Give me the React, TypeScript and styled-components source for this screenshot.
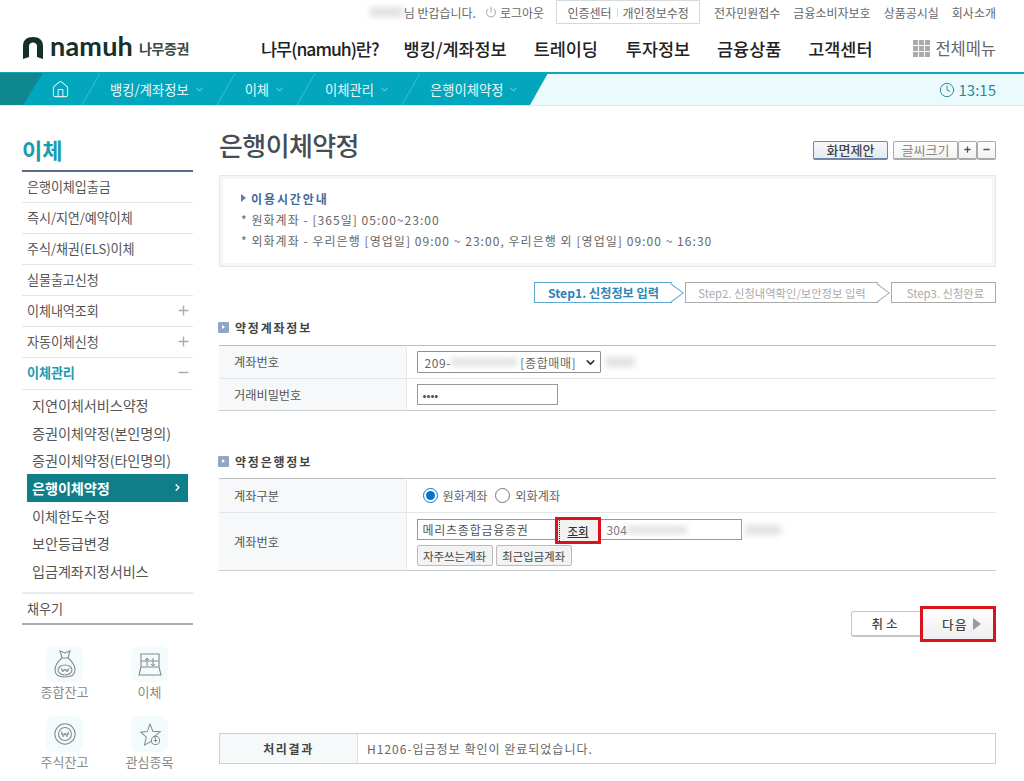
import React from "react";
import styled, { createGlobalStyle } from "styled-components";
import { ChevronDown, ChevronRight, Clock, House, Plus, Minus, Power } from "lucide-react";

const GlobalStyle = createGlobalStyle`
  html, body { margin: 0; padding: 0; background: #fff; }
  body {
    font-family: "Noto Sans CJK KR", "Noto Sans", sans-serif;
    font-size: 12px;
    color: #555;
    overflow: hidden;
  }
  * { box-sizing: border-box; }
`;

const Page = styled.div`
  width: 1024px;
  height: 781px;
  overflow: hidden;
`;

const Blur = styled.span<{ $w: number; $h?: number }>`
  display: inline-block;
  width: ${(p) => p.$w}px;
  height: ${(p) => p.$h ?? 10}px;
  background: #cfd1d3;
  filter: blur(3px);
  opacity: 0.65;
  flex: none;
`;

const UtilBar = styled.div`
  height: 24px;
  padding-right: 28px;
  display: flex;
  justify-content: flex-end;
  align-items: center;
  font-size: 12px;
  color: #666;
`;

const Greeting = styled.span`
  display: flex;
  align-items: center;
  gap: 1px;
  margin-right: 9px;
`;

const Logout = styled.span`
  display: flex;
  align-items: center;
  gap: 3px;
  margin-right: 12px;
`;

const CertBox = styled.div`
  width: 144px;
  height: 24px;
  border: 1px solid #d5d9da;
  display: flex;
  align-items: center;
  justify-content: center;
  gap: 5px;
  margin-right: 1px;
`;

const Divider = styled.i`
  width: 1px;
  height: 9px;
  background: #ddd;
`;

const UtilLink = styled.span`
  margin-left: 13px;
`;

const Header = styled.header`
  height: 48px;
  padding: 0 28px 0 22px;
  display: flex;
  align-items: center;
`;

const Logo = styled.div`
  width: 239px;
  display: flex;
  align-items: center;
  color: #15302c;
`;

const LogoWord = styled.span`
  font-family: Lato, sans-serif;
  font-size: 27px;
  font-weight: 700;
  line-height: 1;
  margin: -5px 6px 0 6px;
  letter-spacing: 0.2px;
`;

const LogoKr = styled.span`
  font-size: 14px;
  font-weight: 700;
  color: #3a4a47;
  letter-spacing: -0.4px;
`;

const Nav = styled.nav`
  flex: 1;
  display: flex;
  align-items: center;
  font-size: 17.5px;
  font-weight: 500;
  color: #222;
  letter-spacing: -0.05px;
`;

const NavItem = styled.span<{ $gap: number; $tight?: boolean }>`
  margin-right: ${(p) => p.$gap}px;
  white-space: nowrap;
  letter-spacing: ${(p) => (p.$tight ? "-1px" : "inherit")};
`;

const AllMenu = styled.span`
  margin-left: auto;
  display: flex;
  align-items: center;
  gap: 5px;
  font-size: 16.5px;
  font-weight: 400;
  color: #666;
`;

const GridIcon = styled.span`
  display: grid;
  grid-template-columns: repeat(3, 5px);
  grid-auto-rows: 5px;
  gap: 1px;
  i { background: #aaa; }
`;

const TrailBar = styled.div`
  height: 34px;
  background: #ebfbfd;
  border-top: 2px solid #0fa6bc;
  border-bottom: 1px solid #e4e8e9;
  display: flex;
  padding-right: 28px;
  justify-content: space-between;
`;

const Trail = styled.div`
  width: 548px;
  height: 32px;
  margin-top: -1px;
  background: #03a7bd;
  clip-path: polygon(0 0, 100% 0, 530px 100%, 0 100%);
  display: flex;
  align-items: center;
  color: #e6f8fb;
  font-size: 13.3px;
`;

const HomeWedge = styled.div`
  width: 43px;
  height: 100%;
  background: #0e8791;
  clip-path: polygon(0 0, 100% 0, 23px 100%, 0 100%);
  flex: none;
`;

const HomeCell = styled.div`
  width: 47px;
  flex: none;
  display: flex;
  justify-content: center;
  padding-right: 12px;
`;

const Crumb = styled.div`
  position: relative;
  height: 100%;
  display: flex;
  align-items: center;
  gap: 5px;
  padding: 0 20px 0 20px;
  white-space: nowrap;
  &::before {
    content: "";
    position: absolute;
    left: 0;
    top: -2px;
    height: 38px;
    width: 1px;
    background: #37bbcd;
    transform: rotate(30deg);
  }
`;

const TimeBox = styled.div`
  display: flex;
  align-items: center;
  gap: 4px;
  font-size: 15px;
  color: #2a8a96;
`;

const Body = styled.div`
  display: flex;
  padding: 0 28px 0 22px;
  gap: 26px;
`;

const Side = styled.aside`
  width: 171px;
  flex: none;
`;

const SideTitle = styled.h2`
  margin: 28px 0 0;
  height: 38px;
  border-bottom: 2px solid #5a6b86;
  font-size: 22px;
  line-height: 30px;
  font-weight: 700;
  color: #1a9cb0;
`;

const SideItem = styled.div<{ $open?: boolean; $last?: boolean }>`
  height: 31px;
  padding: 0 2px 2px 5px;
  display: flex;
  align-items: center;
  justify-content: space-between;
  border-bottom: ${(p) => (p.$last ? "0" : "1px solid #e2e5e6")};
  font-size: 13.1px;
  letter-spacing: -0.1px;
  font-weight: ${(p) => (p.$open ? 700 : 400)};
  color: ${(p) => (p.$open ? "#1a9cb0" : "#555")};
`;

const SubList = styled.div`
  border-top: 1px solid #e2e5e6;
  border-bottom: 2px solid #e9ebec;
  padding: 1px 5px 7px;
`;

const SubItem = styled.div<{ $active?: boolean }>`
  height: 27.7px;
  padding: 0 5px;
  display: flex;
  align-items: center;
  justify-content: space-between;
  font-size: 14.2px;
  letter-spacing: -0.1px;
  white-space: nowrap;
  font-weight: ${(p) => (p.$active ? 700 : 400)};
  color: ${(p) => (p.$active ? "#fff" : "#555")};
  background: ${(p) => (p.$active ? "#0e7f88" : "transparent")};
`;

const FillItem = styled(SideItem)`
  border-bottom: 2px solid #a9abad;
  padding-bottom: 0;
`;

const Quick = styled.div`
  display: grid;
  grid-template-columns: 85px 85px;
  grid-auto-rows: 70px;
  margin: 21px 0 0 0;
`;

const QuickItem = styled.div`
  display: flex;
  flex-direction: column;
  align-items: center;
  gap: 0;
  font-size: 13px;
  color: #888;
  white-space: nowrap;
`;

const QuickIcon = styled.div`
  width: 37px;
  height: 36px;
  border-radius: 8px;
  background: #f3fbfc;
  display: flex;
  align-items: center;
  justify-content: center;
`;

const Main = styled.main`
  flex: 1;
  min-width: 0;
`;

const TitleRow = styled.div`
  margin-top: 23px;
  height: 32px;
  display: flex;
  align-items: center;
  justify-content: space-between;
`;

const Title = styled.h1`
  margin: 0;
  font-size: 26px;
  line-height: 32px;
  font-weight: 500;
  color: #454d55;
  letter-spacing: -0.6px;
`;

const Tools = styled.div`
  display: flex;
  align-items: center;
  margin-top: 10px;
`;

const ToolBtn = styled.span<{ $w: number; $blue?: boolean; $gap?: number }>`
  width: ${(p) => p.$w}px;
  height: 19px;
  display: flex;
  align-items: center;
  justify-content: center;
  background: ${(p) => (p.$blue ? "linear-gradient(#f6f8fb, #e4e9f3)" : "linear-gradient(#fff, #f1f1f1)")};
  border: 1px solid ${(p) => (p.$blue ? "#6f86ad" : "#aaa")};
  border-bottom-width: 2px;
  border-radius: 2px;
  font-size: 13px;
  font-weight: ${(p) => (p.$blue ? 500 : 400)};
  color: ${(p) => (p.$blue ? "#444" : "#888")};
  margin-right: ${(p) => p.$gap ?? 0}px;
`;

const InfoBox = styled.section`
  margin-top: 14px;
  height: 92px;
  border: 1px solid #e6e7e7;
  outline: 3px solid #f4f5f5;
  outline-offset: -4px;
  padding: 13px 21px 0;
  font-size: 12px;
  color: #666;
`;

const InfoHead = styled.div`
  display: flex;
  align-items: center;
  gap: 5px;
  height: 18px;
  margin-bottom: 2px;
  font-weight: 700;
  color: #456a9c;
  letter-spacing: 1.9px;
  &::before {
    content: "";
    border-left: 5px solid #5e7fa8;
    border-top: 4px solid transparent;
    border-bottom: 4px solid transparent;
  }
`;

const InfoLine = styled.div`
  height: 21px;
  line-height: 21px;
  white-space: nowrap;
  letter-spacing: 1.05px;
`;

const Steps = styled.div`
  margin-top: 15px;
  height: 21px;
  display: flex;
  justify-content: flex-end;
  gap: 13px;
`;

const Step = styled.div<{ $w: number; $on?: boolean; $arrow?: boolean }>`
  position: relative;
  width: ${(p) => p.$w}px;
  height: 21px;
  border: 1px solid ${(p) => (p.$on ? "#5ea7d0" : "#aaa")};
  border-right-width: ${(p) => (p.$arrow ? 0 : 1)}px;
  display: flex;
  align-items: center;
  justify-content: center;
  font-size: ${(p) => (p.$on ? 12.2 : 11.3)}px;
  font-weight: ${(p) => (p.$on ? 700 : 400)};
  color: ${(p) => (p.$on ? "#2e83b6" : "#aaa")};
  white-space: nowrap;
  padding-left: ${(p) => (p.$arrow ? 0 : 4)}px;
  &::after {
    content: ${(p) => (p.$arrow ? '""' : "none")};
    position: absolute;
    right: -7px;
    top: 2px;
    width: 15px;
    height: 15px;
    border-top: 1px solid ${(p) => (p.$on ? "#5ea7d0" : "#aaa")};
    border-right: 1px solid ${(p) => (p.$on ? "#5ea7d0" : "#aaa")};
    transform: rotate(45deg) skew(-8deg, -8deg);
  }
`;

const SectionHead = styled.h3<{ $top: number }>`
  margin: ${(p) => p.$top}px 0 0 -1px;
  height: 20px;
  display: flex;
  align-items: center;
  gap: 6px;
  font-size: 12px;
  font-weight: 700;
  color: #444;
  letter-spacing: 1.8px;
`;

const HeadMark = styled.i`
  width: 11px;
  height: 11px;
  background: #8fa6c4;
  border-radius: 1px;
  display: flex;
  align-items: center;
  justify-content: center;
  &::before {
    content: "";
    border-left: 3px solid #fff;
    border-top: 2px solid transparent;
    border-bottom: 2px solid transparent;
  }
`;

const FormTable = styled.table<{ $top: number }>`
  width: 100%;
  margin-top: ${(p) => p.$top}px;
  border-collapse: collapse;
  table-layout: fixed;
  border-top: 1px solid #b9bdbf;
  border-bottom: 1px solid #c8cccd;
`;

const Row = styled.tr<{ $h: number }>`
  height: ${(p) => p.$h}px;
  & + & { border-top: 1px solid #e3e6e7; }
`;

const Th = styled.th`
  width: 187px;
  padding: 0 0 0 15px;
  background: #f6f8f9;
  border-right: 1px solid #e6e8e9;
  text-align: left;
  font-size: 12.2px;
  font-weight: 400;
  color: #555;
`;

const Td = styled.td`
  padding: 0 0 0 10px;
  font-size: 12px;
  color: #666;
`;

const FieldRow = styled.div`
  display: flex;
  align-items: center;
`;

const SelectBox = styled.div`
  width: 184px;
  height: 22px;
  border: 1px solid #8f8f8f;
  border-radius: 1px;
  padding: 0 3px 0 7px;
  display: flex;
  align-items: center;
  font-size: 12px;
  letter-spacing: 0.6px;
  color: #666;
  margin-right: 4px;
  white-space: nowrap;
`;

const SelectChevron = styled(ChevronDown)`
  margin-left: auto;
`;

const TextField = styled.div<{ $w: number; $h?: number }>`
  width: ${(p) => p.$w}px;
  height: ${(p) => p.$h ?? 21}px;
  border: 1px solid #999;
  padding: 0 5px;
  display: flex;
  align-items: center;
  font-size: 11.6px;
  color: #555;
  white-space: nowrap;
`;

const Radio = styled.i<{ $on?: boolean; $first?: boolean }>`
  width: 15px;
  height: 15px;
  border-radius: 50%;
  border: ${(p) => (p.$on ? "1.5px solid #0075d8" : "1px solid #777")};
  background: #fff;
  margin-left: ${(p) => (p.$first ? 6 : 0)}px;
  margin-right: 5px;
  display: flex;
  align-items: center;
  justify-content: center;
  &::after {
    content: "";
    display: ${(p) => (p.$on ? "block" : "none")};
    width: 9px;
    height: 9px;
    border-radius: 50%;
    background: #0075d8;
  }
`;

const RadioLabel = styled.span`
  margin-right: 8px;
  font-size: 12.2px;
`;

const BankField = styled.div`
  position: relative;
  width: 325px;
  height: 21px;
  border: 1px solid #999;
  padding-left: 5px;
  display: flex;
  align-items: center;
  font-size: 12px;
  color: #555;
  letter-spacing: 0.75px;
  margin-right: 3px;
`;

const LookupBtn = styled.span`
  position: absolute;
  left: 137px;
  top: -3px;
  width: 46px;
  height: 27px;
  border: 3px solid #d9141c;
  background: #f2f2f2;
  display: flex;
  align-items: center;
  justify-content: center;
  padding-left: 1px;
  font-size: 11.5px;
  font-weight: 500;
  letter-spacing: 0;
  color: #333;
  text-decoration: underline;
  &::before {
    content: "";
    position: absolute;
    left: 1px;
    top: 0;
    bottom: 0;
    border-left: 1px dotted #333;
  }
`;

const AccountText = styled.span`
  position: absolute;
  left: 189px;
  letter-spacing: 0.2px;
  display: flex;
  align-items: center;
  color: #777;
`;

const CellStack = styled.div`
  display: flex;
  flex-direction: column;
  gap: 5px;
  padding-top: 2px;
`;

const SmallBtns = styled.div`
  display: flex;
  gap: 3px;
`;

const SmallBtn = styled.span`
  width: 76px;
  height: 21px;
  border: 1px solid #bbb;
  border-radius: 2px;
  background: #f3f3f3;
  display: flex;
  align-items: center;
  justify-content: center;
  font-size: 11.6px;
  color: #444;
  letter-spacing: -0.2px;
`;

const Actions = styled.div`
  margin-top: 35px;
  height: 36px;
  display: flex;
  justify-content: flex-end;
  align-items: center;
`;

const CancelBtn = styled.span`
  width: 69px;
  height: 26px;
  border: 1px solid #c5c5c5;
  border-right: 0;
  border-bottom-width: 2px;
  border-radius: 3px 0 0 3px;
  background: #fff;
  display: flex;
  align-items: center;
  justify-content: center;
  font-size: 12.5px;
  font-weight: 500;
  color: #444;
  letter-spacing: 3px;
`;

const NextBtn = styled.span`
  width: 76px;
  height: 36px;
  border: 3.5px solid #d9141c;
  background: linear-gradient(#fff, #eee);
  display: flex;
  align-items: center;
  justify-content: center;
  gap: 5px;
  padding-left: 7px;
  font-size: 12.5px;
  font-weight: 500;
  color: #444;
  letter-spacing: 1.5px;
  &::after {
    content: "";
    border-left: 8px solid #999;
    border-top: 6px solid transparent;
    border-bottom: 6px solid transparent;
  }
`;

const Result = styled.div`
  margin-top: 91px;
  height: 31px;
  border: 1px solid #c8d0d2;
  display: flex;
  align-items: center;
  font-size: 12px;
  color: #666;
`;

const ResultHead = styled.div`
  width: 138px;
  height: 100%;
  background: #f6f9fa;
  border-right: 1px solid #d9dfe0;
  display: flex;
  align-items: center;
  justify-content: center;
  font-weight: 700;
  color: #444;
  letter-spacing: 1.6px;
`;

const ResultText = styled.div`
  padding-left: 9px;
  letter-spacing: 1px;
`;

const LogoMark = () => (
  <svg width="22" height="24" viewBox="0 0 22 24">
    <path
      d="M1 23V10C1 4 5 1 11 1C17 1 21 4 21 10V23L15 21V10C15 8 13 6.500 11 6.500C9 6.500 7 8 7 10V21Z"
      fill="#15302c"
    />
  </svg>
);

const BagIcon = () => (
  <svg width="26" height="30" viewBox="0 0 26 30" fill="none" stroke="#888" strokeWidth="1.1">
    <path d="M8 2l5 2 5-2-2 7h-6L8 2z" />
    <path d="M10 9C5 13 3 17 3 21c0 5 4 7 10 7s10-2 10-7c0-4-2-8-7-12" />
    <ellipse cx="13" cy="21" rx="7" ry="5" />
    <path d="M9 19l2 4 2-3 2 3 2-4M9 21h8" strokeWidth="0.9" />
  </svg>
);

const TransferIcon = () => (
  <svg width="24" height="24" viewBox="0 0 24 24" fill="none" stroke="#888" strokeWidth="1.1">
    <path d="M3 15V2h18v13M1 23l2-8h18l2 8H1z" />
    <path d="M9 6v8M7 8l2-2 2 2M15 6v8M13 12l2 2 2-2M3 9h18" strokeWidth="1" />
  </svg>
);

const CoinIcon = () => (
  <svg width="24" height="24" viewBox="0 0 26 26" fill="none" stroke="#888" strokeWidth="1.1">
    <circle cx="13" cy="13" r="11" />
    <circle cx="13" cy="13" r="7" />
    <path d="M9 10l2 6 2-4 2 4 2-6M8.500 13h9" strokeWidth="1" />
  </svg>
);

const StarIcon = () => (
  <svg width="24" height="24" viewBox="0 0 26 26" fill="none" stroke="#888" strokeWidth="1.1">
    <path d="M13 2l3 8 8 .6-6 5 1 3M14 21l-7 4 2-8.500-6-5.500 7-.6L13 2" />
    <circle cx="19" cy="20" r="4.500" />
    <path d="M19 18v4M17 20h4" />
  </svg>
);

const App: React.FC = () => {
  const crumbs = ["뱅킹/계좌정보", "이체", "이체관리", "은행이체약정"];
  const quick = [
    { label: "종합잔고", icon: <BagIcon /> },
    { label: "이체", icon: <TransferIcon /> },
    { label: "주식잔고", icon: <CoinIcon /> },
    { label: "관심종목", icon: <StarIcon /> },
  ];

  return (
    <Page>
      <GlobalStyle />
      <UtilBar>
        <Greeting>
          <Blur $w={33} />님 반갑습니다.
        </Greeting>
        <Logout>
          <Power size={12} color="#888" strokeWidth={1.5} />
          로그아웃
        </Logout>
        <CertBox>
          인증센터 <Divider /> 개인정보수정
        </CertBox>
        <UtilLink>전자민원접수</UtilLink>
        <UtilLink>금융소비자보호</UtilLink>
        <UtilLink>상품공시실</UtilLink>
        <UtilLink>회사소개</UtilLink>
      </UtilBar>

      <Header>
        <Logo>
          <LogoMark />
          <LogoWord>namuh</LogoWord>
          <LogoKr>나무증권</LogoKr>
        </Logo>
        <Nav>
          <NavItem $gap={25} $tight>
            나무(namuh)란?
          </NavItem>
          <NavItem $gap={27}>뱅킹/계좌정보</NavItem>
          <NavItem $gap={28}>트레이딩</NavItem>
          <NavItem $gap={27}>투자정보</NavItem>
          <NavItem $gap={27}>금융상품</NavItem>
          <NavItem $gap={0}>고객센터</NavItem>
          <AllMenu>
            <GridIcon>
              {Array.from({ length: 9 }).map((_, i) => (
                <i key={i} />
              ))}
            </GridIcon>
            전체메뉴
          </AllMenu>
        </Nav>
      </Header>

      <TrailBar>
        <Trail>
          <HomeWedge />
          <HomeCell>
            <House size={19} strokeWidth={1.3} color="#d8f5f9" />
          </HomeCell>
          {crumbs.map((c) => (
            <Crumb key={c}>
              {c}
              <ChevronDown size={11} strokeWidth={1.5} color="#c5eef4" />
            </Crumb>
          ))}
        </Trail>
        <TimeBox>
          <Clock size={16} strokeWidth={1.5} color="#2a8a96" />
          13:15
        </TimeBox>
      </TrailBar>

      <Body>
        <Side>
          <SideTitle>이체</SideTitle>
          <SideItem>은행이체입출금</SideItem>
          <SideItem>즉시/지연/예약이체</SideItem>
          <SideItem>주식/채권(ELS)이체</SideItem>
          <SideItem>실물출고신청</SideItem>
          <SideItem>
            이체내역조회 <Plus size={15} strokeWidth={2.2} color="#aaa" />
          </SideItem>
          <SideItem>
            자동이체신청 <Plus size={15} strokeWidth={2.2} color="#aaa" />
          </SideItem>
          <SideItem $open $last>
            이체관리 <Minus size={15} strokeWidth={2.2} color="#aaa" />
          </SideItem>
          <SubList>
            <SubItem>지연이체서비스약정</SubItem>
            <SubItem>증권이체약정(본인명의)</SubItem>
            <SubItem>증권이체약정(타인명의)</SubItem>
            <SubItem $active>
              은행이체약정 <ChevronRight size={11} strokeWidth={3} />
            </SubItem>
            <SubItem>이체한도수정</SubItem>
            <SubItem>보안등급변경</SubItem>
            <SubItem>입금계좌지정서비스</SubItem>
          </SubList>
          <FillItem>채우기</FillItem>
          <Quick>
            {quick.map((q) => (
              <QuickItem key={q.label}>
                <QuickIcon>{q.icon}</QuickIcon>
                {q.label}
              </QuickItem>
            ))}
          </Quick>
        </Side>

        <Main>
          <TitleRow>
            <Title>은행이체약정</Title>
            <Tools>
              <ToolBtn $w={75} $blue $gap={5}>
                화면제안
              </ToolBtn>
              <ToolBtn $w={65}>글씨크기</ToolBtn>
              <ToolBtn $w={19}>
                <Plus size={9} strokeWidth={3.5} color="#555" />
              </ToolBtn>
              <ToolBtn $w={19}>
                <Minus size={9} strokeWidth={3.5} color="#555" />
              </ToolBtn>
            </Tools>
          </TitleRow>

          <InfoBox>
            <InfoHead>이용시간안내</InfoHead>
            <InfoLine>* 원화계좌 - [365일] 05:00~23:00</InfoLine>
            <InfoLine>* 외화계좌 - 우리은행 [영업일] 09:00 ~ 23:00, 우리은행 외 [영업일] 09:00 ~ 16:30</InfoLine>
          </InfoBox>

          <Steps>
            <Step $w={138} $on $arrow>
              Step1. 신청정보 입력
            </Step>
            <Step $w={193} $arrow>
              Step2. 신청내역확인/보안정보 입력
            </Step>
            <Step $w={105}>Step3. 신청완료</Step>
          </Steps>

          <SectionHead $top={14}>
            <HeadMark />
            약정계좌정보
          </SectionHead>
          <FormTable $top={8}>
            <tbody>
              <Row $h={33}>
                <Th>계좌번호</Th>
                <Td>
                  <FieldRow>
                    <SelectBox>
                      209-
                      <Blur $w={66} $h={8} />
                      &nbsp;[종합매매]
                      <SelectChevron size={13} strokeWidth={3} color="#333" />
                    </SelectBox>
                    <Blur $w={30} />
                  </FieldRow>
                </Td>
              </Row>
              <Row $h={32}>
                <Th>거래비밀번호</Th>
                <Td>
                  <TextField $w={141}>••••</TextField>
                </Td>
              </Row>
            </tbody>
          </FormTable>

          <SectionHead $top={40}>
            <HeadMark />
            약정은행정보
          </SectionHead>
          <FormTable $top={7}>
            <tbody>
              <Row $h={34}>
                <Th>계좌구분</Th>
                <Td>
                  <FieldRow>
                    <Radio $on $first />
                    <RadioLabel>원화계좌</RadioLabel>
                    <Radio />
                    <RadioLabel>외화계좌</RadioLabel>
                  </FieldRow>
                </Td>
              </Row>
              <Row $h={58}>
                <Th>계좌번호</Th>
                <Td>
                  <CellStack>
                    <FieldRow>
                      <BankField>
                        메리츠종합금융증권
                        <LookupBtn>조회</LookupBtn>
                        <AccountText>
                          304
                          <Blur $w={60} $h={8} />
                        </AccountText>
                      </BankField>
                      <Blur $w={36} />
                    </FieldRow>
                    <SmallBtns>
                      <SmallBtn>자주쓰는계좌</SmallBtn>
                      <SmallBtn>최근입금계좌</SmallBtn>
                    </SmallBtns>
                  </CellStack>
                </Td>
              </Row>
            </tbody>
          </FormTable>

          <Actions>
            <CancelBtn>취소</CancelBtn>
            <NextBtn>다음</NextBtn>
          </Actions>

          <Result>
            <ResultHead>처리결과</ResultHead>
            <ResultText>H1206-입금정보 확인이 완료되었습니다.</ResultText>
          </Result>
        </Main>
      </Body>
    </Page>
  );
};

export default App;
